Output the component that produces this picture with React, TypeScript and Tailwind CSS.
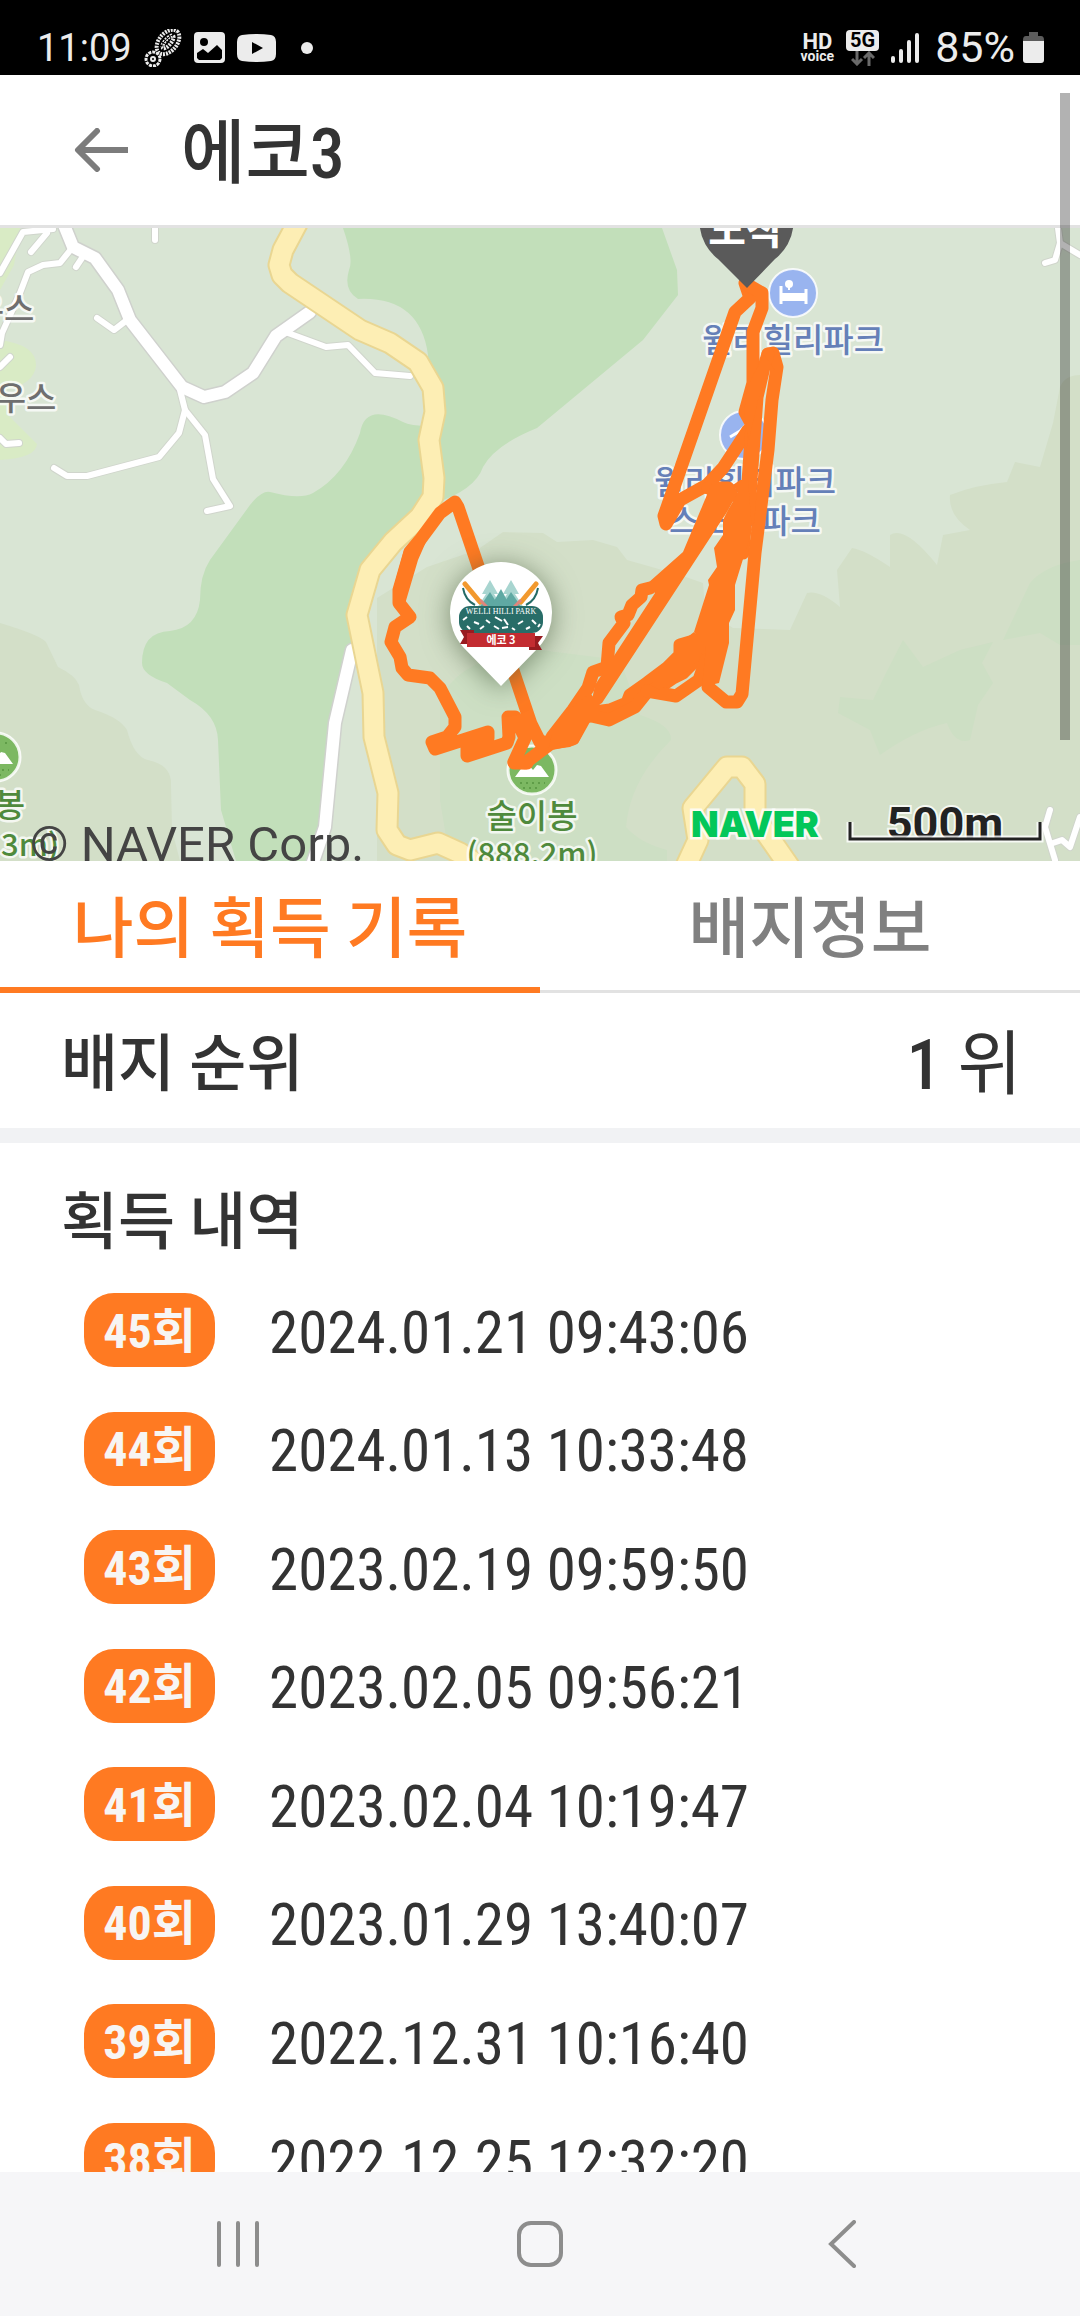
import { useState } from 'react'

interface BadgeRecord {
    count: number
    acquiredAt: string
}

const records: BadgeRecord[] = [
    { count: 45, acquiredAt: '2024.01.21 09:43:06' },
    { count: 44, acquiredAt: '2024.01.13 10:33:48' },
    { count: 43, acquiredAt: '2023.02.19 09:59:50' },
    { count: 42, acquiredAt: '2023.02.05 09:56:21' },
    { count: 41, acquiredAt: '2023.02.04 10:19:47' },
    { count: 40, acquiredAt: '2023.01.29 13:40:07' },
    { count: 39, acquiredAt: '2022.12.31 10:16:40' },
    { count: 38, acquiredAt: '2022.12.25 12:32:20' },
]

const whiteRoads = [
    '0,273 23,232 53,229',
    '47,233 31,252',
    '72,248 60,263 43,265 28,272 20,293 2,333 0,345',
    '82,258 76,267',
    '155,220 155,240',
    '97,318 114,330 127,320',
    '0,367 10,357',
    '0,438 6,444 19,443',
    '180,390 185,410 179,433 159,457 87,476 67,476 54,468',
    '185,410 205,435 213,479 230,506 207,511',
    '288,333 326,347 348,345 375,373 410,376',
    '1058,228 1060,243 1055,260 1045,263',
    '1060,243 1080,255',
    '1050,810 1045,827 1055,860',
    '1053,843 1062,840 1070,847 1080,817',
]

const wideRoads = [
    '62,220 73,247 95,258 118,290 130,320 182,387 204,397 225,392 253,373 276,336 310,312',
    '352,650 335,723 325,827 313,862',
]

const yellowRoads = [
    '299,220 283,250 279,265 282,275 290,283 360,330 390,343 418,362 433,388 435,412 429,440 434,478 433,497 420,517 393,542 370,570 357,615 373,693 374,737 388,793 387,830 397,845 410,850 438,843 460,853 480,866',
    '686,866 698,840 693,808 727,767 742,767 755,784 755,817 789,866',
]

const trackLines = [
    '745,283 750,298 735,312 664,516 666,524 680,500 707,485 723,468 748,430',
    '748,285 762,293 762,308 753,332 753,383 745,412 752,425 750,453 743,553',
    '768,354 773,353 777,367 772,400 768,450 755,553 742,694 737,702 726,702 708,687 712,650',
    '768,354 764,367 757,397 753,453 748,520',
    '708,488 728,488 732,495',
    '650,588 642,590 641,597 632,605 628,615 621,617 624,623 609,643 607,667 593,672 588,688 573,710 552,737',
    '707,637 680,645 680,655 667,668 647,683 630,695 627,703 610,710 587,713',
    '706,650 683,673 673,678 660,687 647,692 635,707 609,720 587,715',
    '647,691 676,696 699,680 706,660',
    '588,712 573,739 550,744 525,763 514,763',
    '545,742 540,742 531,724 477,563 458,507 455,502 440,513 420,540 410,552 399,590 399,603 410,617 395,627 391,642 400,657 402,668 408,675 430,678 440,688 455,717 455,727 447,737 432,742 435,749 488,732 488,738 467,747 467,756 507,743 509,737 508,717 515,717 525,738 514,762 527,763',
]

const trackAreas = [
    '748,480 752,530 735,585 735,610 729,623 729,643 719,683 702,687 706,647 694,632 709,585 708,580 717,567 714,548 723,535 723,520 728,510 738,493 733,485 740,480',
    '709,490 683,552 648,583 655,593 595,685 590,710 602,703 727,512 737,494 728,483 712,483',
    '694,632 680,643 675,660 650,685 660,690 680,675 690,670 706,647',
    '568,710 590,693 600,705 600,720 588,723 578,743 570,747 548,750 552,735',
    '764,355 748,385 744,412 749,440 758,400 768,370 775,370',
    '440,510 404,550 393,590 393,604 405,604 418,560',
]

interface MapLabelProps {
    x: number
    y: number
    color: string
    small?: boolean
    children: string
}

function MapLabel({ x, y, color, small, children }: MapLabelProps) {
    return (
        <text
            x={x}
            y={y}
            fill={color}
            stroke="#ffffff"
            strokeOpacity="0.75"
            strokeWidth="5"
            strokeLinejoin="round"
            paintOrder="stroke"
            textAnchor="middle"
            className={small ? 'text-[31px] font-medium' : 'text-[33px] font-medium'}
        >
            {children}
        </text>
    )
}

function PeakIcon({ x, y }: { x: number; y: number }) {
    return (
        <g transform={`translate(${x} ${y})`}>
            <circle r="24" fill="#7cb862" stroke="#ffffff" strokeOpacity="0.85" strokeWidth="3" />
            <path d="M-17 7 L-6 -8 L1 0 L5 -5 L9 -4 L17 7 Z" fill="#ffffff" />
            <path d="M-12 13 H13 M-9 18 H9 M9 -14 H14 M-14 -14 H-9" stroke="#5f9d48" strokeWidth="2" strokeDasharray="2 4" />
        </g>
    )
}

// Welli Hilli Park badge shown inside the pin
function BadgePin() {
    return (
        <g>
            <path
                d="M501 686 L463 647 A51 51 0 1 1 539 647 Z"
                fill="#ffffff"
                className="drop-shadow-[0_3px_14px_rgba(60,80,50,0.6)]"
            />
            <g fill="#a8d5d0">
                <path d="M490 580 L498 594 L494 594 L503 608 L477 608 L486 594 L482 594 Z" />
                <path d="M511 580 L519 594 L515 594 L524 608 L498 608 L507 594 L503 594 Z" />
            </g>
            <g fill="#5fa9a3">
                <path d="M490 592 L500 608 L479 608 Z" />
                <path d="M511 592 L522 608 L501 608 Z" />
                <path d="M501 589 L511 608 L490 608 Z" />
            </g>
            <path d="M465 584 L480 602 M536 584 L521 602" stroke="#f2992e" strokeWidth="5" strokeLinecap="round" />
            <path d="M463 588 Q465 600 475 605 M538 588 Q536 600 526 605" stroke="#246b66" strokeWidth="2" fill="none" />
            <path d="M480 600 L487 607 M521 600 L514 607" stroke="#e0857c" strokeWidth="3" />
            <rect x="459" y="606" width="84" height="27" rx="11" fill="#286d68" />
            <path
                d="M463 620 l4 -3 M467 626 l3 3 M474 622 l5 2 M480 629 l4 -3 M486 620 l4 3 M518 624 l5 -3 M526 629 l4 -2 M532 620 l4 4 M538 627 l2 -3 M495 617 l7 4 M504 619 l4 6 M494 626 l5 3 M502 628 l6 -1 M512 628 l3 2"
                stroke="#ffffff"
                strokeWidth="2"
            />
            <text x="501" y="614" textAnchor="middle" fill="#ffffff" className="font-['Liberation_Serif',serif] text-[8px]">
                WELLI HILLI PARK
            </text>
            <path d="M460 630 H474 V644 H460 L464 637 Z M529 636 H543 L538 643 L542 650 H529 Z" fill="#981b20" />
            <rect x="467" y="633" width="68" height="14" fill="#c32c31" />
            <text x="501" y="644" textAnchor="middle" fill="#ffffff" className="text-[11px] font-bold">
                에코 3
            </text>
        </g>
    )
}

function CourseMap() {
    return (
        <svg viewBox="0 228 1080 633" preserveAspectRatio="xMidYMid slice" className="block h-[633px] w-full bg-[#d9e5d4] font-['Noto_Sans_CJK_KR',sans-serif]" role="img" aria-label="코스 지도">
            {/* Terrain */}
            <path d="M0 228 H20 L14 265 L0 290 Z M0 340 Q37 345 36 366 Q34 384 5 390 L8 415 L37 444 Q36 458 0 460 Z" fill="#d9ebc5" />
            <path d="M0 623 Q40 635 46 642 L58 667 Q75 675 79 685 Q82 705 95 710 Q120 718 127 730 Q134 757 148 760 Q172 765 171 785 L172 830 L180 861 H0 Z" fill="#d3dfc8" />
            <path d="M377 598 L427 567 L477 550 L503 532 L543 533 L557 542 L593 540 L617 547 L627 560 L680 575 L703 583 L705 610 L733 628 L790 630 L807 593 Q820 590 840 607 L837 570 L852 548 Q865 550 890 567 V535 Q905 525 937 565 L943 535 L970 530 Q948 515 950 495 Q975 485 1007 482 L1015 462 L1040 467 L1053 423 L1060 387 Q1065 375 1080 375 V861 H377 Z" fill="#d3dfc8" />
            <path d="M903 640 L923 667 L960 650 L993 642 L982 663 L993 683 L978 705 L970 740 Q955 745 947 723 Q915 730 880 755 L870 730 L838 713 L840 697 L873 700 L885 675 Z" fill="#cddfc4" />
            <path d="M1003 640 L1030 583 Q1045 565 1080 560 V645 L1060 645 L1040 633 Z" fill="#cddfc4" />
            <path d="M440 700 Q460 655 540 650 L620 660 L640 715 Q672 725 671 740 Q630 780 626 827 Q640 843 667 850 V861 H450 L440 800 Z" fill="#cddfc4" />
            <path d="M343 228 H662 L677 270 L678 295 L643 340 L537 428 Q495 445 483 467 Q475 490 435 503 L425 430 L428 355 Q420 296 358 299 Q343 290 349 270 Q354 260 343 228 Z" fill="#c2dfba" />
            <path d="M430 426 Q410 426 403 422 Q365 402 360 433 Q345 475 313 493 Q300 500 270 492 Q262 490 250 505 L210 560 Q200 575 200 600 Q197 628 170 631 Q142 632 142 663 Q142 675 167 683 L190 700 Q217 715 218 740 L221 810 L236 861 H313 L325 827 L335 723 L357 615 L393 542 L433 497 Z" fill="#c2dfba" />

            {/* Roads */}
            <g fill="none" strokeLinecap="round" strokeLinejoin="round">
                {whiteRoads.map((points) => (
                    <polyline key={points} points={points} stroke="#d0d5cc" strokeWidth="8" />
                ))}
                {wideRoads.map((points) => (
                    <polyline key={points} points={points} stroke="#cfd1cd" strokeWidth="15" />
                ))}
                {whiteRoads.map((points) => (
                    <polyline key={points} points={points} stroke="#ffffff" strokeWidth="6" />
                ))}
                {wideRoads.map((points) => (
                    <polyline key={points} points={points} stroke="#ffffff" strokeWidth="12" />
                ))}
                {yellowRoads.map((points) => (
                    <polyline key={points} points={points} stroke="#e9d692" strokeWidth="23" />
                ))}
                {yellowRoads.map((points) => (
                    <polyline key={points} points={points} stroke="#fdeeb4" strokeWidth="19" />
                ))}
            </g>

            {/* Places */}
            <PeakIcon x={-4} y={757} />
            <PeakIcon x={532} y={770} />
            <g transform="translate(793 293)">
                <circle r="24" fill="#99b4ef" stroke="#ffffff" strokeOpacity="0.85" strokeWidth="2" />
                <path d="M-12 -7 V11 M13 -4 V11" stroke="#ffffff" strokeWidth="3" />
                <rect x="-12" y="0" width="25" height="8" fill="#ffffff" />
                <circle cx="-4" cy="-9" r="4" fill="#ffffff" />
                <path d="M-4 -7 V-3" stroke="#ffffff" strokeWidth="2" />
            </g>
            <g transform="translate(744 435)">
                <circle r="24" fill="#99b4ef" stroke="#ffffff" strokeOpacity="0.85" strokeWidth="2" />
                <path d="M-14 2 L-4 -4 L2 -10 L6 2" stroke="#ffffff" strokeWidth="3" fill="none" />
            </g>
            <MapLabel x={793} y={352} color="#6580b8">윌리힐리파크</MapLabel>
            <MapLabel x={745} y={494} color="#6580b8">윌리힐리파크</MapLabel>
            <MapLabel x={745} y={533} color="#6580b8">스노우파크</MapLabel>
            <MapLabel x={532} y={828} color="#4f8a3c">술이봉</MapLabel>
            <MapLabel x={532} y={865} color="#4f8a3c" small>(888.2m)</MapLabel>
            <MapLabel x={10} y={817} color="#4f8a3c">봉</MapLabel>
            <MapLabel x={30} y={856} color="#4f8a3c" small>3m)</MapLabel>
            <MapLabel x={4} y={321} color="#6f6f6f">우스</MapLabel>
            <MapLabel x={26} y={410} color="#6f6f6f">우스</MapLabel>

            {/* Recorded track */}
            <g fill="none" stroke="#ff7a22" strokeWidth="13" strokeLinecap="round" strokeLinejoin="round">
                {trackLines.map((points) => (
                    <polyline key={points} points={points} />
                ))}
            </g>
            <g fill="#ff7a22">
                {trackAreas.map((points) => (
                    <polygon key={points} points={points} />
                ))}
            </g>

            <BadgePin />

            {/* Arrival marker */}
            <path d="M747 288 L718 259 A47 47 0 1 1 775 259 Z" fill="#5a5a5a" />
            <text x="746" y="244" textAnchor="middle" fill="#ffffff" className="text-[41px] font-bold">
                도착
            </text>

            {/* Map credits and scale */}
            <text x="30" y="861" fill="#444444" className="font-[Roboto,sans-serif] text-[49px]">
                © NAVER Corp.
            </text>
            <text x="691" y="837" fill="#03c75a" stroke="#ffffff" strokeOpacity="0.8" strokeWidth="5" paintOrder="stroke" className="font-[Inter,sans-serif] text-[36px] font-black">
                NAVER
            </text>
            <text x="945" y="839" textAnchor="middle" fill="#222222" stroke="#ffffff" strokeOpacity="0.8" strokeWidth="4" paintOrder="stroke" className="font-[Roboto,sans-serif] text-[45px] font-bold">
                500m
            </text>
            <path d="M850 822 V839 H1040 V822" stroke="#ffffff" strokeOpacity="0.8" strokeWidth="7" fill="none" />
            <path d="M850 822 V839 H1040 V822" stroke="#222222" strokeWidth="3" fill="none" />
        </svg>
    )
}

function StatusBar() {
    return (
        <div className="flex h-[75px] shrink-0 items-center bg-black pt-5 pr-9 pl-[37px] font-[Roboto,sans-serif] text-[#ececec]">
            <span className="text-[38px] leading-none">11:09</span>
            {/* Boot print notification */}
            <svg viewBox="0 0 38 38" className="ml-3 size-[38px]" fill="none" stroke="#ececec">
                <ellipse cx="24" cy="13" rx="14" ry="9" transform="rotate(-50 24 13)" strokeWidth="4" strokeDasharray="2 1" />
                <ellipse cx="24" cy="13" rx="8" ry="3" transform="rotate(-50 24 13)" strokeWidth="4" strokeDasharray="2 1" />
                <path d="M15 22 Q20 8 33 4" stroke="#000000" strokeWidth="1" />
                <circle cx="9" cy="30" r="7" strokeWidth="3" strokeDasharray="3 1" />
                <circle cx="9" cy="30" r="2" strokeWidth="2" />
            </svg>
            <svg viewBox="0 0 31 31" className="ml-3 size-[31px]">
                <rect width="31" height="31" rx="4" fill="#ececec" />
                <circle cx="10" cy="10" r="4" fill="#000000" />
                <path d="M3 21 L9 17 L14 21 L23 13 L28 18 V26 L26 28 H5 L3 26 Z" fill="#000000" />
            </svg>
            <svg viewBox="0 0 39 28" className="ml-3 h-7 w-[39px]">
                <path d="M5 1 Q20 -1 34 1 Q39 2 39 8 V20 Q39 26 34 27 Q20 29 5 27 Q0 26 0 20 V8 Q0 2 5 1 Z" fill="#ececec" />
                <path d="M15 8 L26 14 L15 20 Z" fill="#000000" />
            </svg>
            <span className="ml-[25px] size-3 rounded-full bg-[#ececec]" />

            <div className="ml-auto flex flex-col items-center font-bold">
                <span className="text-[22px] leading-4">HD</span>
                <span className="text-[14px] leading-[12px]">voice</span>
            </div>
            <div className="ml-3 flex flex-col items-center">
                <span className="rounded bg-[#ececec] px-1 text-[20px] leading-[21px] font-bold text-black">5G</span>
                <svg viewBox="0 0 24 15" className="h-[15px] w-6" fill="none" stroke="#6a6a6a" strokeWidth="3">
                    <path d="M6 0 V12 M1 8 L6 13 L11 8 M18 15 V3 M13 7 L18 2 L23 7" />
                </svg>
            </div>
            <svg viewBox="0 0 28 30" className="ml-3 h-[30px] w-7" stroke="#ececec" strokeWidth="4" strokeLinecap="round">
                <path d="M2 25 V28 M10 18 V28 M18 9 V28 M26 2 V28" />
            </svg>
            <span className="ml-4 text-[43px] leading-none">85%</span>
            <svg viewBox="0 0 21 31" className="ml-2 h-[31px] w-[21px]">
                <path d="M6 0 H15 V4 H18 Q21 4 21 8 V12 H0 V8 Q0 4 3 4 H6 Z" fill="#5c5c5c" />
                <path d="M0 9 H21 V28 Q21 31 18 31 H3 Q0 31 0 28 Z" fill="#ececec" />
            </svg>
        </div>
    )
}

export default function BadgeDetailPage() {
    const [tab, setTab] = useState<'records' | 'info'>('records')

    const tabClass = (active: boolean) =>
        active
            ? 'h-full border-b-6 border-[#ff7a22] pt-3 text-[#ff7a22]'
            : 'h-full border-b-3 border-[#e2e2e2] pt-[9px] text-[#808080]'

    return (
        <div className="relative flex h-screen flex-col overflow-hidden bg-white font-['Roboto_Condensed','Noto_Sans_CJK_KR',sans-serif] text-[#333333]">
            <StatusBar />

            <header className="flex h-[153px] shrink-0 items-center gap-[53px] border-b-3 border-[#e2e2e2] pl-[74px]">
                <button type="button" aria-label="뒤로">
                    <svg viewBox="0 0 54 44" className="h-11 w-[54px]" fill="none" stroke="#7c7c7c" strokeWidth="6">
                        <path d="M54 22 H5" />
                        <path d="M23 3 L4 22 L23 41" strokeLinecap="round" strokeLinejoin="round" />
                    </svg>
                </button>
                <h1 className="pt-2 text-[70px] leading-none font-medium">에코3</h1>
            </header>

            <CourseMap />

            {/* Tabs */}
            <div role="tablist" className="grid h-[132px] shrink-0 grid-cols-2 text-[66px] leading-none font-medium">
                <button type="button" role="tab" aria-selected={tab === 'records'} onClick={() => setTab('records')} className={tabClass(tab === 'records')}>
                    나의 획득 기록
                </button>
                <button type="button" role="tab" aria-selected={tab === 'info'} onClick={() => setTab('info')} className={tabClass(tab === 'info')}>
                    배지정보
                </button>
            </div>

            <section className="flex h-[150px] shrink-0 items-center justify-between border-b-15 border-[#f1f2f4] pt-2 pr-[58px] pl-[61px] leading-none">
                <h2 className="text-[62px] font-medium">배지 순위</h2>
                <p className="text-[70px]">
                    <span className="font-medium">1</span> 위
                </p>
            </section>

            <section className="min-h-0 flex-1 overflow-hidden">
                <h2 className="px-[61px] pt-[50px] text-[62px] leading-[60px] font-medium">획득 내역</h2>
                <ul className="mt-[18px] grid min-h-[948px] auto-rows-fr pl-[84px]">
                    {records.map((record) => (
                        <li key={record.count} className="flex items-center gap-[54px]">
                            <span className="flex h-[74px] w-[131px] shrink-0 items-center justify-center rounded-[30px] bg-[#ff7a22] pt-[3px] text-[48px] leading-none font-bold text-[#f7f5f3]">
                                {record.count}회
                            </span>
                            <time className="pt-1 text-[59px] leading-none">{record.acquiredAt}</time>
                        </li>
                    ))}
                </ul>
            </section>

            {/* System navigation */}
            <nav className="grid h-36 shrink-0 grid-cols-3 items-center justify-items-center bg-[#f6f6f8] px-[87px]">
                <button type="button" aria-label="최근 앱">
                    <svg viewBox="0 0 48 48" className="size-12" stroke="#8d8d8d" strokeWidth="4" strokeLinecap="round">
                        <path d="M5 3 V45 M24 3 V45 M43 3 V45" />
                    </svg>
                </button>
                <button type="button" aria-label="홈">
                    <svg viewBox="0 0 48 48" className="size-12" fill="none" stroke="#8d8d8d" strokeWidth="4">
                        <rect x="3" y="3" width="42" height="42" rx="12" />
                    </svg>
                </button>
                <button type="button" aria-label="뒤로 가기">
                    <svg viewBox="0 0 48 48" className="size-12" fill="none" stroke="#8d8d8d" strokeWidth="4" strokeLinecap="round">
                        <path d="M36 2 L13 24 L36 46" />
                    </svg>
                </button>
            </nav>

            <div className="absolute top-[93px] right-[10px] h-[647px] w-[10px] bg-black/30" />
        </div>
    )
}
